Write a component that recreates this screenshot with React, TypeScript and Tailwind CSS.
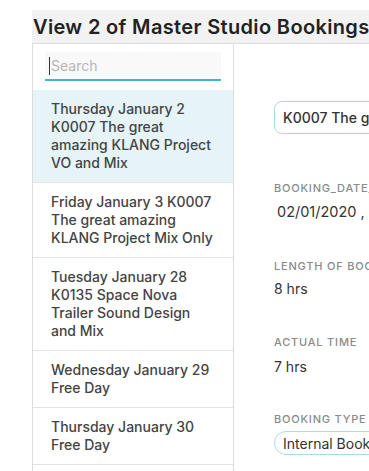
import React from "react";

const items = [
  "Thursday January 2 K0007 The great amazing KLANG Project VO and Mix",
  "Friday January 3 K0007 The great amazing KLANG Project Mix Only",
  "Tuesday January 28 K0135 Space Nova Trailer Sound Design and Mix",
  "Wednesday January 29 Free Day",
  "Thursday January 30 Free Day",
  "Friday January 31 Free Day",
];

export default function App() {
  return (
    <div
      className="w-[369px] h-[471px] overflow-hidden bg-white pl-[32px] pt-[10px]"
      style={{ fontFamily: "Inter, 'Noto Sans', sans-serif" }}
    >
      <div className="w-[700px]">
        <div className="h-[34px] bg-[#f2f2f2] border-b border-[#dcdcdc] flex items-center pl-[1px]">
          <h1 className="text-[20px] font-semibold text-[#222] leading-none tracking-[0.35px] whitespace-nowrap">
            View 2 of Master Studio Bookings
          </h1>
        </div>
        <div className="flex">
          <div className="w-[202px] shrink-0 border-l border-r border-[#dcdcdc] h-[440px]">
            <div className="pt-[8px] pb-[9px] px-[12px]">
              <div className="h-[29px] bg-[#f9f9f9] border-b-2 border-[#3fb6cc] flex items-center pl-[4px]">
                <span className="w-px h-[18px] bg-[#333] mr-[1px]" />
                <span className="text-[14px] text-[#b5b5b5]">Search</span>
              </div>
            </div>
            <div>
              {items.map((t, i) => (
                <div
                  key={i}
                  className={`border-b border-[#e3e3e3] pl-[18px] pr-[18px] py-[10px] text-[14px] leading-[18px] font-medium text-[#444] ${
                    i === 0 ? "bg-[#e6f4f8]" : "bg-white"
                  }`}
                >
                  {t}
                </div>
              ))}
            </div>
          </div>
          <div className="pl-[40px] pt-[57px] flex-1">
            <div className="w-[300px] h-[33px] border border-[#a9dbe5] rounded-[8px] flex items-center pl-[8px] text-[14px] font-medium text-[#333] whitespace-nowrap overflow-hidden">
              K0007 The great amazing KLANG Project VO and Mix
            </div>
            <div className="mt-[47px] text-[11px] tracking-[0.8px] text-[#8a8a8a] font-medium leading-[14px] whitespace-nowrap">
              BOOKING_DATE_TIME
            </div>
            <div className="mt-[7px] pl-[3px] text-[14.5px] text-[#333] leading-[20px] whitespace-nowrap">
              02/01/2020 , 9:00 AM
            </div>
            <div className="mt-[37px] text-[11px] tracking-[0.8px] text-[#8a8a8a] font-medium leading-[14px] whitespace-nowrap">
              LENGTH OF BOOKING
            </div>
            <div className="mt-[6px] text-[14px] text-[#333] leading-[20px]">8 hrs</div>
            <div className="mt-[36px] text-[11px] tracking-[0.8px] text-[#8a8a8a] font-medium leading-[14px] whitespace-nowrap">
              ACTUAL TIME
            </div>
            <div className="mt-[8px] text-[14px] text-[#333] leading-[20px]">7 hrs</div>
            <div className="mt-[35px] text-[11px] tracking-[0.8px] text-[#8a8a8a] font-medium leading-[14px] whitespace-nowrap">
              BOOKING TYPE
            </div>
            <div className="mt-[5px] inline-flex h-[24px] items-center border border-[#a9dbe5] rounded-full pl-[8px] pr-[10px] text-[14px] text-[#333] whitespace-nowrap">
              Internal Booking
            </div>
          </div>
        </div>
      </div>
    </div>
  );
}
